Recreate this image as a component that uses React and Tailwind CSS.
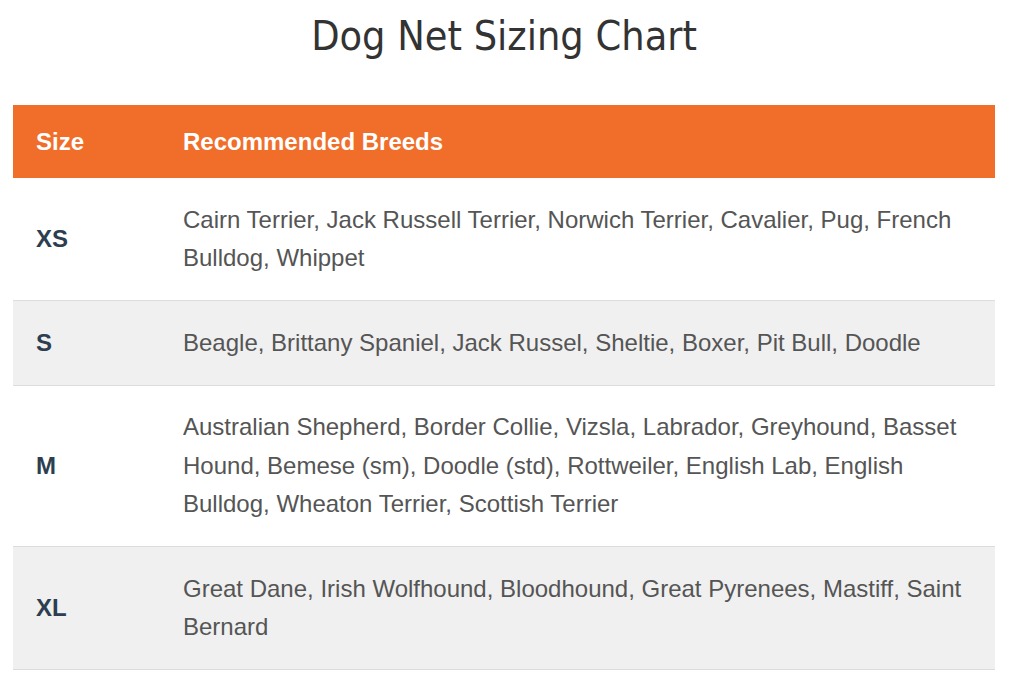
import React from "react";

const rows = [
  { size: "XS", breeds: "Cairn Terrier, Jack Russell Terrier, Norwich Terrier, Cavalier, Pug, French Bulldog, Whippet", gray: false },
  { size: "S", breeds: "Beagle, Brittany Spaniel, Jack Russel, Sheltie, Boxer, Pit Bull, Doodle", gray: true },
  { size: "M", breeds: "Australian Shepherd, Border Collie, Vizsla, Labrador, Greyhound, Basset Hound, Bemese (sm), Doodle (std), Rottweiler, English Lab, English Bulldog, Wheaton Terrier, Scottish Terrier", gray: false },
  { size: "XL", breeds: "Great Dane, Irish Wolfhound, Bloodhound, Great Pyrenees, Mastiff, Saint Bernard", gray: true },
];

export default function App() {
  return (
    <div className="w-[1017px] h-[700px] bg-white overflow-hidden" style={{ fontFamily: '"Liberation Sans", Arial, sans-serif' }}>
      <div className="mx-[13px] w-[982px]">
        <h1 className="text-center text-[41px] leading-[48px] pt-[12px] text-[#333333]" style={{ fontFamily: '"DejaVu Sans Condensed", "DejaVu Sans", sans-serif' }}>
          Dog Net Sizing Chart
        </h1>
        <div className="mt-[45px]">
          <div className="flex bg-[#f06e2a] h-[73px] items-center text-white font-bold text-[24px]">
            <div className="w-[170px] pl-[23px]">Size</div>
            <div className="flex-1 pl-0">Recommended Breeds</div>
          </div>
          {rows.map((r) => (
            <div key={r.size} className={`flex items-center border-b border-[#dddddd] ${r.gray ? "bg-[#f0f0f0]" : "bg-white"}`}>
              <div className="w-[170px] pl-[23px] font-bold text-[24px] text-[#2c3e50]">{r.size}</div>
              <div className="flex-1 pr-[23px] py-[22.5px] text-[24px] leading-[38.5px] text-[#555555]">{r.breeds}</div>
            </div>
          ))}
        </div>
      </div>
    </div>
  );
}
